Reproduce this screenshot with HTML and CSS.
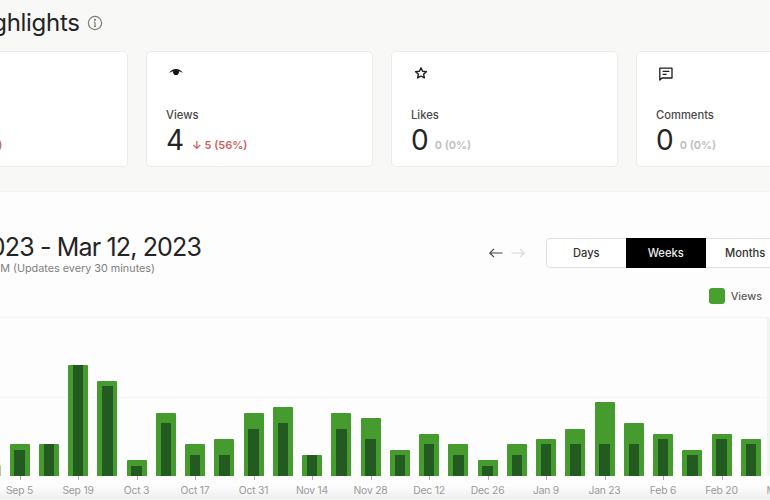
FILE: index.html
```html
<!DOCTYPE html>
<html lang="en">
<head>
    <meta charset="UTF-8">
    <meta name="viewport" content="width=device-width, initial-scale=1.0">
    <title>Post highlights</title>
    <link rel="stylesheet" href="styles.css">
</head>
<body>
    <div class="page">
        <div class="top">
            <div class="title-row">
                <h2>Post highlights</h2>
                <svg class="info" viewBox="0 0 16 16" fill="none" stroke="#7d7d7d" stroke-width="1.2">
                    <circle cx="8" cy="8" r="6.6"/>
                    <path d="M8 7.2v4.2M6.9 11.4h2.2M6.9 7.2H8"/>
                    <circle cx="8" cy="4.8" r="0.5" fill="#7d7d7d"/>
                </svg>
            </div>
            <div class="cards">
                <div class="card">
                    <div class="card-icon"></div>
                    <div class="card-label">Reads</div>
                    <div class="card-value"><span class="num">4</span><span class="delta down">↓ 5 (56%)</span></div>
                </div>
                <div class="card">
                    <div class="card-icon">
                        <svg viewBox="0 0 16 16" width="16" height="16">
                            <path d="M.6 8.400C2.800 5.400 5.200 4 8 4s5.200 1.400 7.400 4.400C13.600 7.200 12.200 6.600 10.900 6.300a3 3 0 1 1-5.800 0C3.800 6.600 2.400 7.200.6 8.400z" fill="#161616"/>
                        </svg>
                    </div>
                    <div class="card-label">Views</div>
                    <div class="card-value"><span class="num">4</span><span class="delta down">↓ 5 (56%)</span></div>
                </div>
                <div class="card">
                    <div class="card-icon">
                        <svg viewBox="0 0 16 16" width="16" height="16">
                            <path d="M8 2.800l1.600 3.500 3.800.4-2.800 2.500.8 3.700L8 11l-3.400 1.900.8-3.700-2.800-2.500 3.800-.4z" fill="none" stroke="#1c1c1c" stroke-width="1.400" stroke-linejoin="round"/>
                        </svg>
                    </div>
                    <div class="card-label">Likes</div>
                    <div class="card-value"><span class="num">0</span><span class="delta flat">0 (0%)</span></div>
                </div>
                <div class="card">
                    <div class="card-icon">
                        <svg viewBox="0 0 16 16" width="16" height="16">
                            <path d="M1.800 3.200h12.200v9.800H4l-2.200 2z" fill="none" stroke="#1c1c1c" stroke-width="1.300" stroke-linejoin="round"/>
                            <path d="M4.600 6.400h6.800M4.600 9.400h4" stroke="#1c1c1c" stroke-width="1.200"/>
                        </svg>
                    </div>
                    <div class="card-label">Comments</div>
                    <div class="card-value"><span class="num">0</span><span class="delta flat">0 (0%)</span></div>
                </div>
            </div>
        </div>

        <div class="bottom">
            <div class="range-row">
                <div class="range">
                    <div class="range-title">Jan 1, 2023 - Mar 12, 2023</div>
                    <div class="range-sub">Last updated: Mar 13, 2023, 4:00 PM (Updates every 30 minutes)</div>
                </div>
                <div class="controls">
                    <svg class="arrow" viewBox="0 0 14 10" fill="none" stroke="#444" stroke-width="1.200"><path d="M13.500 5H.8M5 .8L.8 5 5 9.200"/></svg>
                    <svg class="arrow" viewBox="0 0 14 10" fill="none" stroke="#d8d8d8" stroke-width="1.200"><path d="M.5 5h12.700M9 .8L13.200 5 9 9.200"/></svg>
                    <div class="tabs">
                        <div class="tab">Days</div>
                        <div class="tab active">Weeks</div>
                        <div class="tab">Months</div>
                    </div>
                </div>
            </div>

            <div class="legend"><span class="swatch"></span>Views</div>

            <div class="chart">
                <div class="gridline"></div>
                <div class="hover-band"></div>
                <div class="bars">
                    <div class="bar faded" style="height:11px"></div>
                    <div class="bar" style="height:32px"><div class="inner" style="height:26px"></div></div>
                    <div class="bar" style="height:32px"><div class="inner" style="height:32px"></div></div>
                    <div class="bar" style="height:111px"><div class="inner" style="height:111px"></div></div>
                    <div class="bar" style="height:95px"><div class="inner" style="height:90px"></div></div>
                    <div class="bar" style="height:16px"><div class="inner" style="height:10px"></div></div>
                    <div class="bar" style="height:63px"><div class="inner" style="height:53px"></div></div>
                    <div class="bar" style="height:32px"><div class="inner" style="height:21px"></div></div>
                    <div class="bar" style="height:37px"><div class="inner" style="height:21px"></div></div>
                    <div class="bar" style="height:63px"><div class="inner" style="height:47px"></div></div>
                    <div class="bar" style="height:69px"><div class="inner" style="height:53px"></div></div>
                    <div class="bar" style="height:21px"><div class="inner" style="height:21px"></div></div>
                    <div class="bar" style="height:63px"><div class="inner" style="height:47px"></div></div>
                    <div class="bar" style="height:58px"><div class="inner" style="height:37px"></div></div>
                    <div class="bar" style="height:26px"><div class="inner" style="height:21px"></div></div>
                    <div class="bar" style="height:42px"><div class="inner" style="height:32px"></div></div>
                    <div class="bar" style="height:32px"><div class="inner" style="height:21px"></div></div>
                    <div class="bar" style="height:16px"><div class="inner" style="height:10px"></div></div>
                    <div class="bar" style="height:32px"><div class="inner" style="height:21px"></div></div>
                    <div class="bar" style="height:37px"><div class="inner" style="height:32px"></div></div>
                    <div class="bar" style="height:47px"><div class="inner" style="height:32px"></div></div>
                    <div class="bar" style="height:74px"><div class="inner" style="height:32px"></div></div>
                    <div class="bar" style="height:53px"><div class="inner" style="height:32px"></div></div>
                    <div class="bar" style="height:42px"><div class="inner" style="height:37px"></div></div>
                    <div class="bar" style="height:26px"><div class="inner" style="height:21px"></div></div>
                    <div class="bar" style="height:42px"><div class="inner" style="height:37px"></div></div>
                    <div class="bar" style="height:37px"><div class="inner" style="height:32px"></div></div>
                </div>
            </div>

            <div class="axis">
                <div class="tick">Sep 5</div>
                <div class="tick">Sep 19</div>
                <div class="tick">Oct 3</div>
                <div class="tick">Oct 17</div>
                <div class="tick">Oct 31</div>
                <div class="tick">Nov 14</div>
                <div class="tick">Nov 28</div>
                <div class="tick">Dec 12</div>
                <div class="tick">Dec 26</div>
                <div class="tick">Jan 9</div>
                <div class="tick">Jan 23</div>
                <div class="tick">Feb 6</div>
                <div class="tick">Feb 20</div>
                <div class="tick">Mar 6</div>
            </div>
        </div>
    </div>
</body>
</html>
```

FILE: styles.css
```css
html, body {
    margin: 0;
    height: 500px;
    overflow: hidden;
    background-color: #f8f8f7;
}
body {
    font-family: Inter, "Liberation Sans", sans-serif;
    color: #242424;
}
.page {
    width: 884px;
    margin-left: -98px;
}

/* top part, highlights */
.top {
    height: 192px;
    box-sizing: border-box;
    padding-top: 8px;
}
.title-row {
    display: flex;
    align-items: center;
    gap: 7px;
    height: 30px;
    margin-bottom: 13px;
}
h2 {
    margin: 0 0 0 15.500px;
    font-size: 24px;
    font-weight: 400;
    line-height: 30px;
    letter-spacing: -0.300px;
    white-space: nowrap;
}
.info {
    width: 16px;
    height: 16px;
}
.cards {
    display: flex;
    gap: 18px;
    margin-left: -0.700px;
}
.card {
    flex: none;
    width: 227px;
    height: 116px;
    box-sizing: border-box;
    padding: 13px 18.700px 0;
    background-color: #fff;
    border: 1px solid #ececec;
    border-radius: 5px;
}
.card-icon {
    height: 16px;
    margin: 0 0 26px 2px;
}
.card-label {
    font-size: 11.200px;
    font-weight: 500;
    line-height: 16px;
    color: #484848;
}
.card-value {
    display: flex;
    align-items: center;
    height: 34px;
}
.num {
    margin-right: 8px;
    font-size: 28px;
    line-height: 34px;
}
.delta {
    font-size: 11px;
    font-weight: 600;
    margin-top: 9px;
    white-space: nowrap;
}
.delta.down {
    color: #cf6060;
}
.delta.flat {
    margin-left: -2px;
    color: #bdbdbd;
}

/* bottom part, chart */
.bottom {
    height: 308px;
    box-sizing: border-box;
    padding-top: 40px;
    border-top: 1px solid #f3f3f2;
    margin-top: -1px;
    background: linear-gradient(#fdfdfd 294px, #efefef);
}
.range-row {
    display: flex;
    justify-content: space-between;
    height: 44px;
}
.range {
    display: flex;
    flex-direction: column;
    align-items: flex-end;
    width: 299px;
}
.range-title {
    font-size: 25px;
    line-height: 30px;
    letter-spacing: -0.850px;
    white-space: nowrap;
}
.range-sub {
    margin-right: 46px;
    font-size: 10.800px;
    line-height: 14px;
    color: #808080;
    white-space: nowrap;
}
.controls {
    display: flex;
    align-items: flex-start;
    padding-top: 6px;
}
.arrow {
    width: 14px;
    height: 10px;
    margin: 10px 8px 0 0;
}
.arrow + .arrow {
    margin-right: 21px;
}
.tabs {
    display: flex;
    height: 30px;
    box-sizing: border-box;
    background-color: #fff;
    border: 1px solid #e0e0e0;
    border-radius: 4px;
}
.tab {
    width: 79.500px;
    margin: -1px 0;
    font-size: 11.200px;
    font-weight: 500;
    line-height: 30px;
    text-align: center;
    color: #333;
}
.tab.active {
    background-color: #000;
    color: #eee;
}
.legend {
    display: flex;
    align-items: center;
    justify-content: flex-end;
    gap: 6px;
    height: 16px;
    margin: 12px 24px 13px 0;
    font-size: 10.800px;
    font-weight: 500;
    color: #5c5c5c;
}
.swatch {
    width: 16px;
    height: 16px;
    border-radius: 3px;
    background-color: #49a030;
}
.chart {
    position: relative;
    height: 159px;
    box-sizing: border-box;
    border-top: 1px solid #f5f5f5;
}
.gridline {
    position: absolute;
    top: 79px;
    left: 0;
    right: 0;
    border-top: 1px solid #f6f6f6;
}
.hover-band {
    position: absolute;
    top: 0;
    bottom: 0;
    left: 865px;
    right: 0;
    background-color: #f0f6ed;
}
.bars {
    position: relative;
    display: flex;
    align-items: flex-end;
    gap: 9.250px;
    height: 100%;
    padding-left: 78.250px;
}
.bar {
    flex: none;
    display: flex;
    align-items: flex-end;
    justify-content: center;
    width: 20px;
    border-radius: 1px 1px 0 0;
    background-color: #469b2f;
}
.bar.faded {
    width: 20.750px;
    margin-right: -0.750px;
    background-color: #a6d398;
}
.inner {
    width: 10.500px;
    background-color: #235a22;
}
.axis {
    display: flex;
    padding-left: 88.250px;
}
.tick {
    flex: none;
    width: 58.500px;
    padding-top: 7px;
    position: relative;
    font-size: 10.300px;
    line-height: 14px;
    letter-spacing: -0.200px;
    text-align: center;
    color: #9a9a9a;
}
.tick::before {
    content: "";
    position: absolute;
    top: 0;
    left: 50%;
    height: 4px;
    border-left: 1px solid #a8a8a8;
}
```
